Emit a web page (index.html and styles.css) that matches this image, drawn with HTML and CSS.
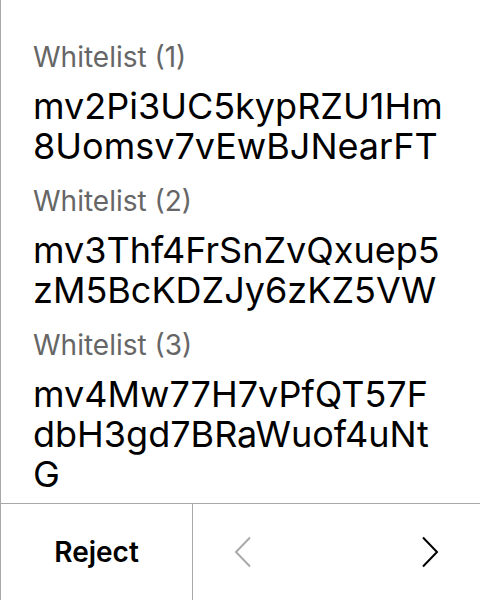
FILE: index.html
```html
<!DOCTYPE html>
<html>
<head>
<meta charset="utf-8">
<link rel="stylesheet" href="styles.css">
</head>
<body>
<div class="screen">
  <div class="content">
    <div class="item">
      <div class="label">Whitelist (1)</div>
      <div class="addr">mv2Pi3UC5kypRZU1Hm8Uomsv7vEwBJNearFT</div>
    </div>
    <div class="item">
      <div class="label">Whitelist (2)</div>
      <div class="addr">mv3Thf4FrSnZvQxuep5zM5BcKDZJy6zKZ5VW</div>
    </div>
    <div class="item">
      <div class="label">Whitelist (3)</div>
      <div class="addr">mv4Mw77H7vPfQT57FdbH3gd7BRaWuof4uNtG</div>
    </div>
  </div>
  <div class="footer">
    <div class="reject">Reject</div>
    <div class="nav">
      <svg class="chev prev" width="18" height="32" viewBox="0 0 18 32"><path d="M16 1.5 L2 16 L16 30.5" fill="none" stroke="currentColor" stroke-width="2"/></svg>
      <svg class="chev next" width="18" height="32" viewBox="0 0 18 32"><path d="M2 1.5 L16 16 L2 30.5" fill="none" stroke="currentColor" stroke-width="2"/></svg>
    </div>
  </div>
</div>
</body>
</html>
```
FILE: styles.css
```css
html, body {
  margin: 0;
  padding: 0;
  background: #fff;
}
body {
  font-family: Inter, "Noto Sans", sans-serif;
  color: #000;
}
.screen {
  width: 479px;
  height: 600px;
  border-left: 1px solid #a8a8a8;
  display: flex;
  flex-direction: column;
}
.content {
  height: 504px;
  flex: none;
  border-bottom: 1px solid #a8a8a8;
  padding: 40px 0 0 32px;
  box-sizing: border-box;
  display: flex;
  flex-direction: column;
  gap: 18px;
}
.label {
  font-size: 28px;
  line-height: 34px;
  color: #666;
  margin-bottom: 12px;
}
.addr {
  font-size: 36px;
  line-height: 40px;
  width: 413px;
  word-break: break-all;
}
.footer {
  flex: 1;
  display: flex;
}
.reject {
  width: 191px;
  border-right: 1px solid #a8a8a8;
  display: flex;
  align-items: center;
  justify-content: center;
  font-size: 28px;
  font-weight: 600;
}
.nav {
  flex: 1;
  display: flex;
  align-items: center;
  justify-content: space-between;
  padding: 0 41px 0 41px;
}
.chev { display: block; }
.prev { color: #aaa; }
.next { color: #000; }
```
